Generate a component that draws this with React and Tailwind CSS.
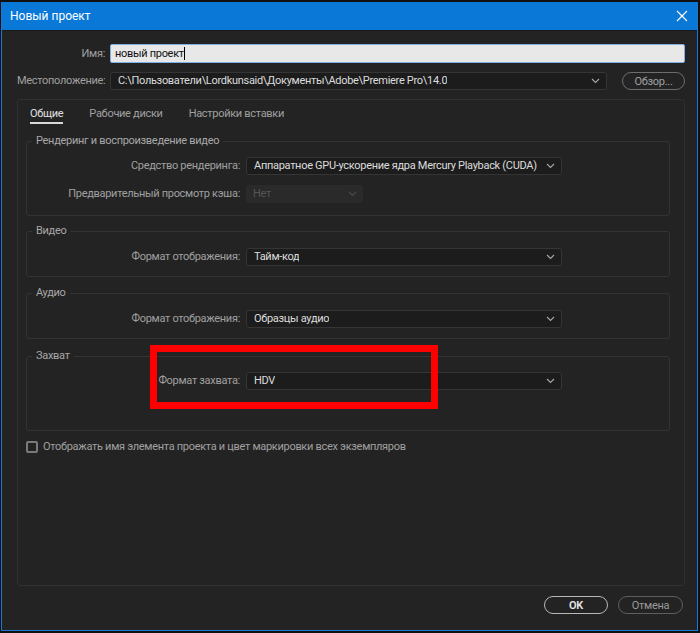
import React from 'react';

const font = { fontFamily: 'Roboto, "Liberation Sans", sans-serif', letterSpacing: '-0.3px' };

// petite flèche des listes déroulantes
const Chevron = ({ color = '#a8a8a8' }) => (
    <svg width="9" height="6" viewBox="0 0 9 6" className="shrink-0">
        <polyline points="1,1 4.5,4.5 8,1" fill="none" stroke={color} strokeWidth="1.1" />
    </svg>
);

const Select = ({ value, width, disabled }) => (
    <div
        className={`h-[18px] flex items-center justify-between pl-[7px] pr-[6px] rounded-[3px] ${disabled ? 'bg-[#2a2a2a] text-[#555]' : 'bg-[#1c1c1c] border border-[#353535] text-[#dcdcdc]'}`}
        style={{ width }}
    >
        <span className="whitespace-nowrap overflow-hidden">{value}</span>
        <Chevron color={disabled ? '#4a4a4a' : '#a8a8a8'} />
    </div>
);

const Row = ({ label, children }) => (
    <div className="flex items-center gap-[6px]">
        <div className="w-[213px] text-right text-[#a0a0a0] whitespace-nowrap">{label}</div>
        {children}
    </div>
);

const Group = ({ title, children, className = '' }) => (
    <fieldset className={`border border-[#333] rounded-[3px] px-0 ${className}`}>
        <legend className="ml-[5px] px-[4px] leading-[14px] text-[#a8a8a8]">{title}</legend>
        {children}
    </fieldset>
);

export default function App() {
    return (
        <div className="w-[700px] h-[633px] bg-[#101010] pt-[2px] pl-[1px] pr-[2px] pb-[2px] text-[11px] leading-[14px]" style={font}>
            <div className="h-full flex flex-col border border-t-0 border-[#1a78d2] bg-[#232323]">
                {/* BARRE DE TITRE */}
                <div className="h-[29px] shrink-0 bg-[#0a78d7] flex items-center justify-between pl-[8px] pr-[9px] border-b border-[#1a1a1a]">
                    <span className="text-white text-[12px] tracking-normal">Новый проект</span>
                    <svg width="12" height="12" viewBox="0 0 12 12">
                        <path d="M1 1 L11 11 M11 1 L1 11" stroke="#fff" strokeWidth="1.2" />
                    </svg>
                </div>

                <div className="flex-1 flex flex-col pl-[15px] pr-[12px] pt-[13px]">
                    {/* NOM */}
                    <div className="flex items-center gap-[5px]">
                        <div className="w-[88px] text-right text-[#a0a0a0]">Имя:</div>
                        <div className="flex-1 h-[19px] bg-[#e8e8e8] border border-[#7fb0e3] rounded-[2px] flex items-center pl-[4px] text-[#111]">
                            новый проект<span className="w-px h-[13px] bg-black"></span>
                        </div>
                    </div>

                    {/* EMPLACEMENT */}
                    <div className="flex items-center gap-[5px] mt-[9px]">
                        <div className="w-[88px] text-right text-[#a0a0a0] whitespace-nowrap">Местоположение:</div>
                        <Select value="C:\Пользователи\Lordkunsaid\Документы\Adobe\Premiere Pro\14.0" width={497} />
                        <button className="ml-[10px] flex-1 h-[18px] rounded-full border-[1.5px] border-[#6e6e6e] text-[#a0a0a0] leading-none">Обзор...</button>
                    </div>

                    {/* PANNEAU À ONGLETS */}
                    <div className="flex-1 mt-[9px] border border-[#303030] rounded-[3px] pl-[8px] pr-[14px] pt-[7px]">
                        <div className="flex gap-[26px] pl-[4px] text-[#a0a0a0]">
                            <div className="text-[#e0e0e0] border-b-2 border-[#d8d8d8] pb-[1px]">Общие</div>
                            <div>Рабочие диски</div>
                            <div>Настройки вставки</div>
                        </div>

                        <Group title="Рендеринг и воспроизведение видео" className="mt-[10px] pt-[9px] pb-[12px]">
                            <div className="flex flex-col gap-[10px]">
                                <Row label="Средство рендеринга:">
                                    <Select value="Аппаратное GPU-ускорение ядра Mercury Playback (CUDA)" width={316} />
                                </Row>
                                <Row label="Предварительный просмотр кэша:">
                                    <Select value="Нет" width={117} disabled />
                                </Row>
                            </div>
                        </Group>

                        <Group title="Видео" className="mt-[8px] pt-[10px] pb-[10px]">
                            <Row label="Формат отображения:">
                                <Select value="Тайм-код" width={316} />
                            </Row>
                        </Group>

                        <Group title="Аудио" className="mt-[9px] pt-[10px] pb-[10px]">
                            <Row label="Формат отображения:">
                                <Select value="Образцы аудио" width={316} />
                            </Row>
                        </Group>

                        <Group title="Захват" className="mt-[10px] pt-[9px] pb-[40px] relative">
                            <Row label="Формат захвата:">
                                <Select value="HDV" width={316} />
                            </Row>
                            {/* cadre rouge d'annotation */}
                            <div className="absolute left-[123px] top-[-18px] w-[288px] h-[64px] border-[7px] border-[#ff0000]"></div>
                        </Group>

                        <div className="flex items-center gap-[5px] mt-[9px] text-[#a0a0a0]">
                            <div className="w-[12px] h-[12px] border-2 border-[#7a7a7a] rounded-[2px]"></div>
                            <span>Отображать имя элемента проекта и цвет маркировки всех экземпляров</span>
                        </div>
                    </div>

                    {/* BOUTONS */}
                    <div className="flex justify-end gap-[10px] mt-[10px] mb-[16px] pr-[2px]">
                        <button className="w-[64px] h-[18px] rounded-full border-[1.5px] border-[#b8b8b8] text-[#e6e6e6] font-semibold leading-none">OK</button>
                        <button className="w-[65px] h-[18px] rounded-full border-[1.5px] border-[#5e5e5e] text-[#9a9a9a] leading-none">Отмена</button>
                    </div>
                </div>
            </div>
        </div>
    );
}
